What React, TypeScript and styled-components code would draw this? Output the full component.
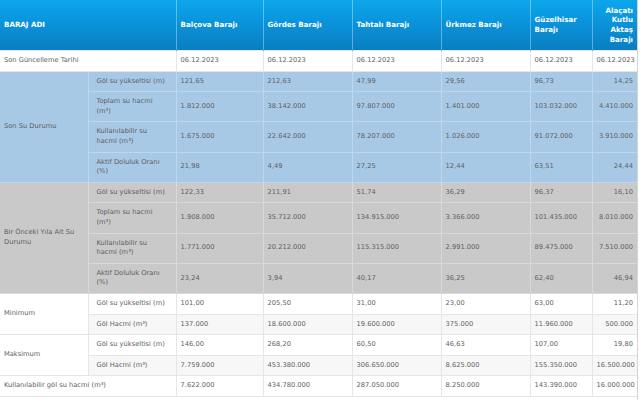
import React, { FC } from "react";
import styled, { createGlobalStyle } from "styled-components";

const Global = createGlobalStyle`
  html, body {
    margin: 0;
    padding: 0;
    background: #ffffff;
  }
  body {
    font-family: "DejaVu Sans", "Open Sans", sans-serif;
    -webkit-font-smoothing: antialiased;
  }
`;

type Tone = "white" | "stripe" | "blue" | "gray";

const bg: Record<Tone, string> = {
  white: "#ffffff",
  stripe: "#f7f7f7",
  blue: "#a8c9e6",
  gray: "#c9c9c9",
};

const line: Record<Tone, string> = {
  white: "#e6e6e6",
  stripe: "#e6e6e6",
  blue: "#bed7ee",
  gray: "#d9d9d9",
};

const Wrap = styled.div`
  width: 637px;
  height: 400px;
  overflow: hidden;
  border-right: 1px solid #d4d4d4;
`;

const Table = styled.table`
  table-layout: fixed;
  width: 637px;
  border-collapse: collapse;
  font-size: 6.7px;
  line-height: 9.6px;
  color: #5e5e5e;
`;

const Head = styled.thead`
  background: linear-gradient(180deg, #0ba6ec 0%, #0a8fd6 55%, #0a7dc0 100%);
`;

const Heading = styled.th<{ $right?: boolean }>`
  height: 50px;
  padding: 0 4px;
  color: #ffffff;
  font-size: 7.1px;
  font-weight: bold;
  text-align: ${(p) => (p.$right ? "right" : "left")};
  vertical-align: middle;
  border-left: 1px solid rgba(255, 255, 255, 0.35);
  &:first-child {
    border-left: none;
  }
`;

const Row = styled.tr<{ $tone: Tone }>`
  background: ${(p) => bg[p.$tone]};
`;

const Cell = styled.td<{ $tone: Tone; $right?: boolean; $sub?: boolean }>`
  padding: ${(p) => (p.$sub ? "5px 9px 5px 8px" : "5px 4px")};
  text-align: ${(p) => (p.$right ? "right" : "left")};
  vertical-align: middle;
  border: 1px solid ${(p) => line[p.$tone]};
  background: ${(p) => bg[p.$tone]};
  &:first-child {
    border-left: none;
  }
  &:last-child {
    border-right: none;
  }
`;

const dams = [
  "Balçova Barajı",
  "Gördes Barajı",
  "Tahtalı Barajı",
  "Ürkmez Barajı",
  "Güzelhisar Barajı",
  "Alaçatı Kutlu Aktaş Barajı",
];

const widths = [88, 88, 87, 89, 89, 89, 62, 45];

type Line = { label: string; values: string[] };
type Group = { title: string; tone: Tone; stripe?: boolean; lines: Line[] };

const groups: Group[] = [
  {
    title: "Son Su Durumu",
    tone: "blue",
    lines: [
      { label: "Göl su yükseltisi (m)", values: ["121,65", "212,63", "47,99", "29,56", "96,73", "14,25"] },
      { label: "Toplam su hacmi (m³)", values: ["1.812.000", "38.142.000", "97.807.000", "1.401.000", "103.032.000", "4.410.000"] },
      { label: "Kullanılabilir su hacmi (m³)", values: ["1.675.000", "22.642.000", "78.207.000", "1.026.000", "91.072.000", "3.910.000"] },
      { label: "Aktif Doluluk Oranı (%)", values: ["21,98", "4,49", "27,25", "12,44", "63,51", "24,44"] },
    ],
  },
  {
    title: "Bir Önceki Yıla Ait Su Durumu",
    tone: "gray",
    lines: [
      { label: "Göl su yükseltisi (m)", values: ["122,33", "211,91", "51,74", "36,29", "96,37", "16,10"] },
      { label: "Toplam su hacmi (m³)", values: ["1.908.000", "35.712.000", "134.915.000", "3.366.000", "101.435.000", "8.010.000"] },
      { label: "Kullanılabilir su hacmi (m³)", values: ["1.771.000", "20.212.000", "115.315.000", "2.991.000", "89.475.000", "7.510.000"] },
      { label: "Aktif Doluluk Oranı (%)", values: ["23,24", "3,94", "40,17", "36,25", "62,40", "46,94"] },
    ],
  },
  {
    title: "Minimum",
    tone: "white",
    stripe: true,
    lines: [
      { label: "Göl su yükseltisi (m)", values: ["101,00", "205,50", "31,00", "23,00", "63,00", "11,20"] },
      { label: "Göl Hacmi (m³)", values: ["137.000", "18.600.000", "19.600.000", "375.000", "11.960.000", "500.000"] },
    ],
  },
  {
    title: "Maksimum",
    tone: "white",
    stripe: true,
    lines: [
      { label: "Göl su yükseltisi (m)", values: ["146,00", "268,20", "60,50", "46,63", "107,00", "19,80"] },
      { label: "Göl Hacmi (m³)", values: ["7.759.000", "453.380.000", "306.650.000", "8.625.000", "155.350.000", "16.500.000"] },
    ],
  },
];

const Values: FC<{ values: string[]; tone: Tone }> = ({ values, tone }) => (
  <>
    {values.map((v, i) => (
      <Cell key={i} $tone={tone} $right={i === values.length - 1}>
        {v}
      </Cell>
    ))}
  </>
);

const App: FC = () => {
  return (
    <Wrap>
      <Global />
      <Table>
        <colgroup>
          {widths.map((w, i) => (
            <col key={i} style={{ width: w }} />
          ))}
        </colgroup>
        <Head>
          <tr>
            <Heading colSpan={2}>BARAJ ADI</Heading>
            {dams.map((d, i) => (
              <Heading key={d} $right={i === dams.length - 1}>
                {d}
              </Heading>
            ))}
          </tr>
        </Head>
        <tbody>
          <Row $tone="white">
            <Cell $tone="white" colSpan={2}>
              Son Güncelleme Tarihi
            </Cell>
            <Values tone="white" values={dams.map(() => "06.12.2023")} />
          </Row>
          {groups.map((g) =>
            g.lines.map((l, i) => {
              const tone: Tone = g.stripe && i % 2 === 1 ? "stripe" : g.tone;
              return (
                <Row key={g.title + i} $tone={tone}>
                  {i === 0 && (
                    <Cell $tone={g.tone} rowSpan={g.lines.length}>
                      {g.title}
                    </Cell>
                  )}
                  <Cell $tone={tone} $sub>
                    {l.label}
                  </Cell>
                  <Values tone={tone} values={l.values} />
                </Row>
              );
            })
          )}
          <Row $tone="white">
            <Cell $tone="white" colSpan={2}>
              Kullanılabilir göl su hacmi (m³)
            </Cell>
            <Values
              tone="white"
              values={["7.622.000", "434.780.000", "287.050.000", "8.250.000", "143.390.000", "16.000.000"]}
            />
          </Row>
        </tbody>
      </Table>
    </Wrap>
  );
};

export default App;
